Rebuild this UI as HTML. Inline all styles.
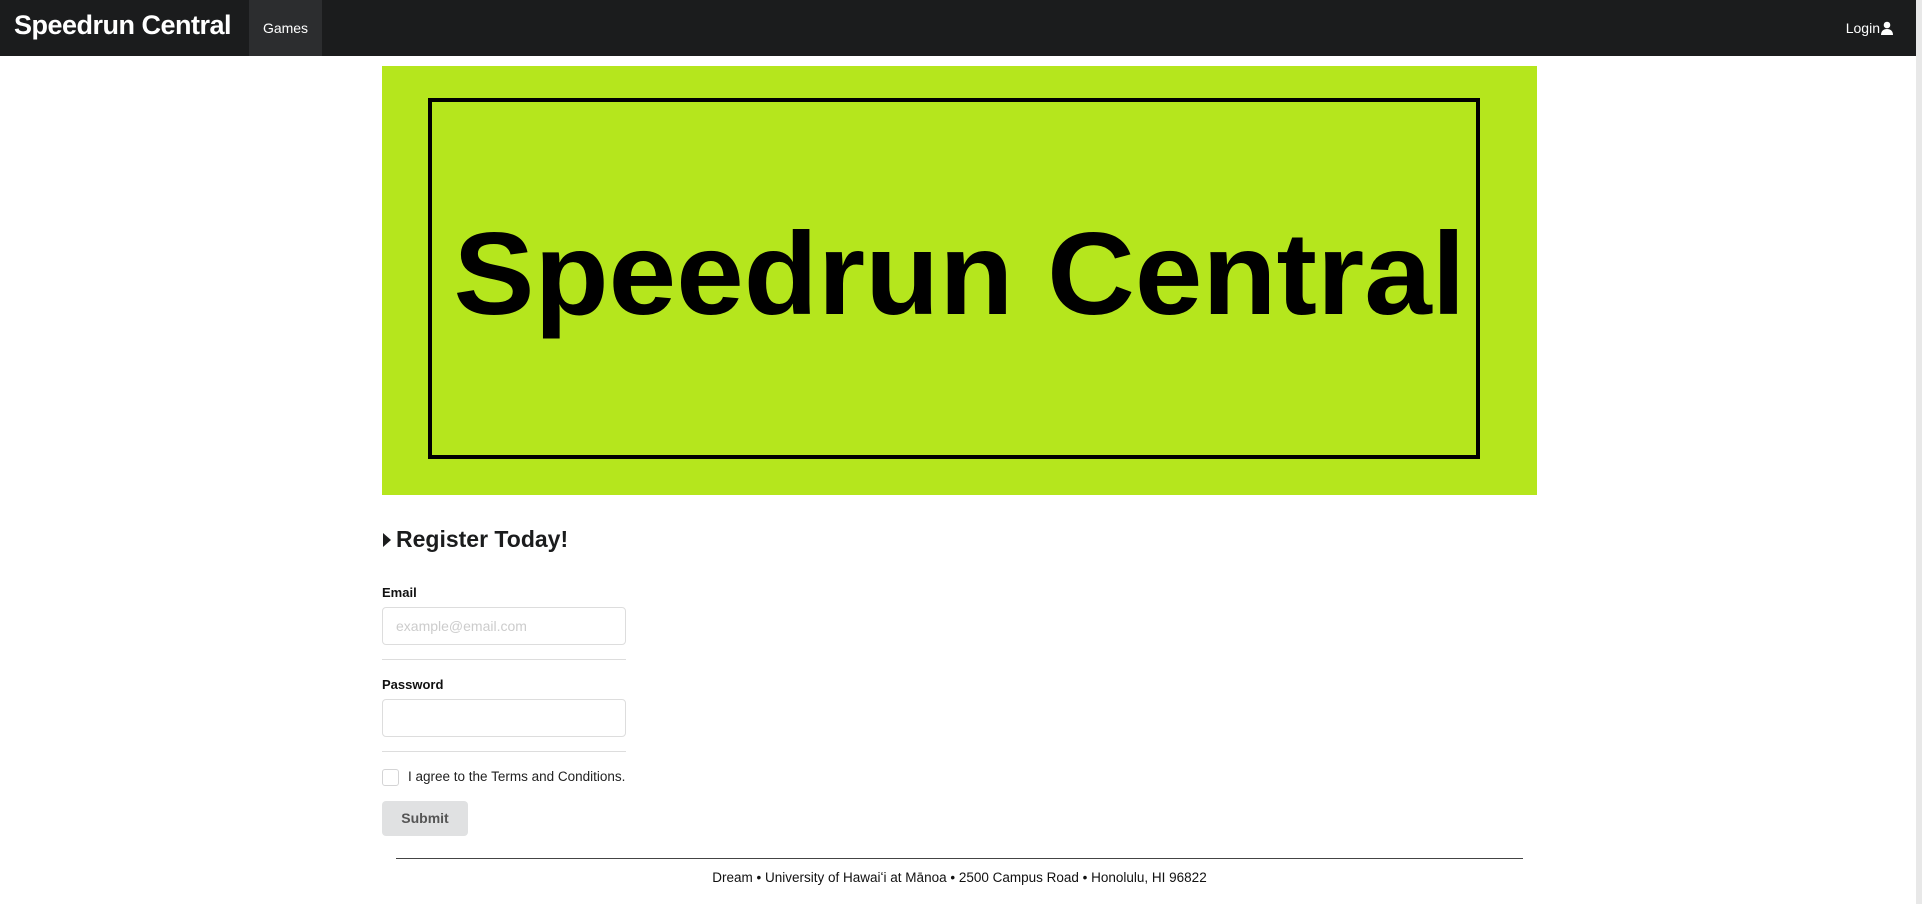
<!DOCTYPE html>
<html><head><meta charset="utf-8"><style>
*{box-sizing:border-box;margin:0;padding:0}
body{width:1922px;height:904px;overflow:hidden;background:#fff;font-family:"Liberation Sans",sans-serif;color:#222;position:relative}
.nav{position:absolute;left:0;top:0;width:1922px;height:56px;background:#1b1c1d}
.brand{position:absolute;left:14px;top:10px;color:#fff;font-weight:bold;font-size:27px;letter-spacing:-0.5px}
.games{position:absolute;left:249px;top:0;width:73px;height:56px;background:#2c2d2f;color:#fff;font-size:14px;line-height:56px;text-align:center}
.login{position:absolute;right:28px;top:0;color:#fff;font-size:14px;line-height:56px}
.banner{position:absolute;left:382px;top:66px;width:1155px;height:429px;background:#b5e61d}
.inner{position:absolute;left:46px;top:32px;width:1052px;height:361px;border:4px solid #000}
.big{position:absolute;left:0;top:152px;width:1155px;text-align:center;font-weight:bold;font-size:114px;line-height:114px;color:#000;transform:scale(1.065,1.03);transform-origin:center;white-space:nowrap}
h2{position:absolute;left:382px;top:526px;font-size:23px;font-weight:bold;color:#1b1c1d}
.lab{position:absolute;left:382px;font-size:13px;font-weight:bold;color:#111}
.inp{position:absolute;left:382px;width:244px;height:38px;border:1px solid #ddd;border-radius:4px;font-size:14px;color:#ccc;padding:10px 13px}
.hr{position:absolute;left:382px;width:244px;height:1px;background:#ddd}
.cb{position:absolute;left:382px;top:769px;width:17px;height:17px;border:1px solid #d4d4d5;border-radius:3px}
.cbt{position:absolute;left:408px;top:769px;font-size:13.5px;color:#222}
.btn{position:absolute;left:382px;top:801px;width:86px;height:35px;background:#e0e1e2;border-radius:4px;color:#555;font-weight:bold;font-size:14px;line-height:35px;text-align:center}
.fl{position:absolute;left:396px;top:858px;width:1127px;height:1px;background:#444}
.ft{position:absolute;left:396px;top:870px;width:1127px;text-align:center;font-size:13.5px;color:#111}
.sb{position:absolute;right:0;top:0;width:6px;height:904px;background:#e8e8e8}
</style></head><body>
<div class="nav">
<div class="brand">Speedrun Central</div>
<div class="games">Games</div>
<div class="login">Login<svg width="14" height="14" viewBox="0 0 14 14" style="vertical-align:-2px"><circle cx="7" cy="4" r="3.3" fill="#fff"/><path d="M1 14c0-4 2.5-6 6-6s6 2 6 6z" fill="#fff"/></svg></div>
</div>
<div class="banner"><div class="inner"></div><div class="big">Speedrun Central</div></div>
<h2><svg width="10" height="16" viewBox="0 0 10 16" style="vertical-align:-1px;margin-right:4px"><path d="M1 1l8 7-8 7z" fill="#1b1c1d"/></svg>Register Today!</h2>
<div class="lab" style="top:585px">Email</div>
<div class="inp" style="top:607px">example@email.com</div>
<div class="hr" style="top:659px"></div>
<div class="lab" style="top:677px">Password</div>
<div class="inp" style="top:699px"></div>
<div class="hr" style="top:751px"></div>
<div class="cb"></div><div class="cbt">I agree to the Terms and Conditions.</div>
<div class="btn">Submit</div>
<div class="fl"></div>
<div class="ft">Dream • University of Hawaiʻi at Mānoa • 2500 Campus Road • Honolulu, HI 96822</div>
<div class="sb"></div>
</body></html>
